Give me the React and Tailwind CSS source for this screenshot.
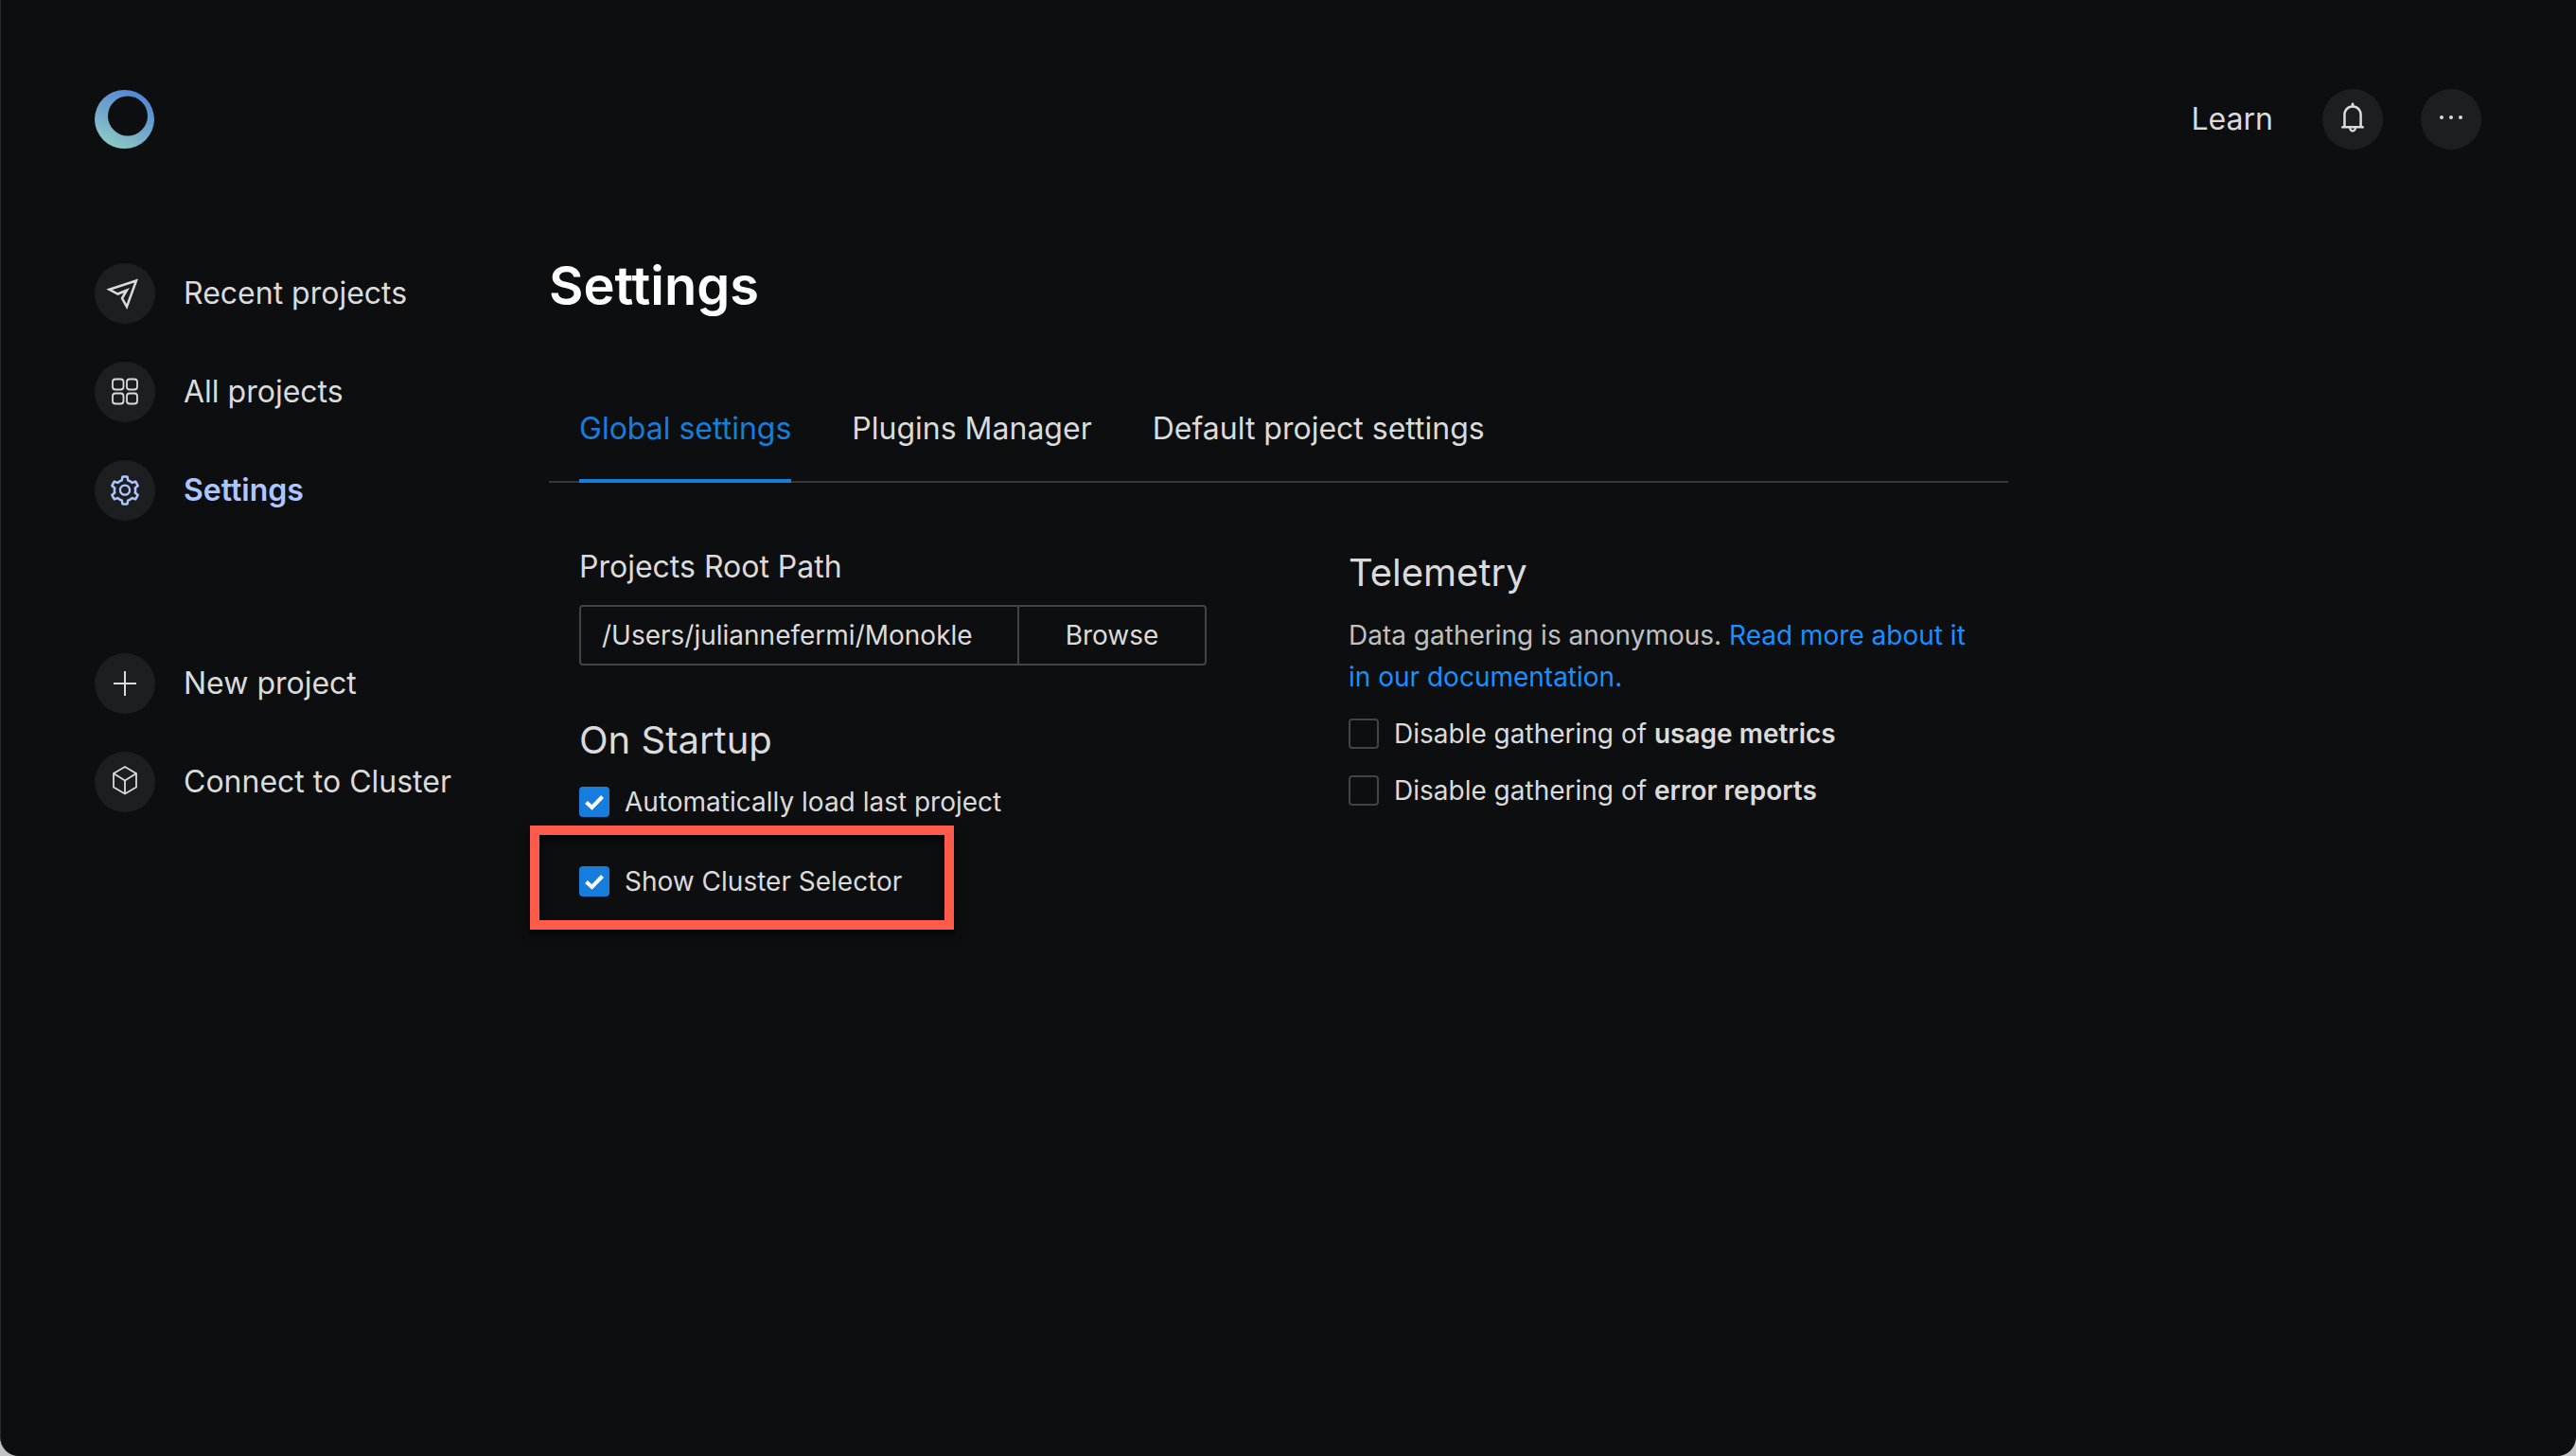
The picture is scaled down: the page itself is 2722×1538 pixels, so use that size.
import { AiOutlineBell, AiOutlineSetting } from "react-icons/ai";

function Logo() {
  return (
    <svg viewBox="0 0 63 62" className="h-[62px] w-[63px]" role="img" aria-label="Monokle">
      <defs>
        <linearGradient id="ring" x1="0.3" y1="0.95" x2="0.75" y2="0.1">
          <stop offset="0" stopColor="#8bc7c3" />
          <stop offset="0.5" stopColor="#6fa6cc" />
          <stop offset="1" stopColor="#5588d6" />
        </linearGradient>
      </defs>
      <path
        fill="url(#ring)"
        fillRule="evenodd"
        d="M31.500 0a31.500 31 0 1 0 0 62a31.500 31 0 1 0 0-62zM35 6.500a21 21 0 1 1 0 42a21 21 0 1 1 0-42z"
      />
    </svg>
  );
}

function SendIcon() {
  return (
    <svg viewBox="0 0 64 64" className="size-16" fill="none" stroke="currentColor" strokeWidth="2.500" strokeLinejoin="miter">
      <path d="M44 18.500L15.500 27.800L24.500 32.500L34 28.500L29 37L34 46Z" />
    </svg>
  );
}

function GridIcon() {
  return (
    <svg viewBox="0 0 64 64" className="size-16" fill="none" stroke="currentColor" strokeWidth="1.800">
      <rect x="19" y="18.500" width="11.500" height="11" rx="3" />
      <rect x="34" y="18.500" width="11" height="11" rx="3" />
      <rect x="19" y="33.500" width="11.500" height="11" rx="3" />
      <rect x="34" y="33.500" width="11" height="11" rx="3" />
    </svg>
  );
}

function PlusIcon() {
  return (
    <svg viewBox="0 0 64 64" className="size-16" stroke="currentColor" strokeWidth="2">
      <path d="M20 32H44M32 19V45" />
    </svg>
  );
}

function CubeIcon() {
  return (
    <svg viewBox="0 0 64 64" className="size-16" fill="none" stroke="currentColor" strokeWidth="1.800" strokeLinejoin="round">
      <path d="M32 16L44 23V37.500L32 44.500L20 37.500V23ZM20 23L32 30.500L44 23M32 30.500V44.500" />
    </svg>
  );
}

function DotsIcon() {
  return (
    <svg viewBox="0 0 64 64" className="size-16" fill="currentColor">
      <circle cx="22" cy="30" r="2" />
      <circle cx="32" cy="30" r="2" />
      <circle cx="42" cy="30" r="2" />
    </svg>
  );
}

function Disc({ children }) {
  return (
    <span className="flex size-16 shrink-0 items-center justify-center rounded-full bg-[#1d1e20]">{children}</span>
  );
}

function NavItem({ icon, label, active }) {
  return (
    <button
      type="button"
      aria-current={active ? "page" : undefined}
      className={
        active
          ? "flex items-center gap-[30px] text-left text-[32px] leading-10 font-semibold text-[#adc6ff]"
          : "flex items-center gap-[30px] text-left text-[32px] leading-10 text-[#dbdbdb]"
      }
    >
      <Disc>{icon}</Disc>
      {label}
    </button>
  );
}

function Tab({ label, active }) {
  return (
    <button
      type="button"
      role="tab"
      aria-selected={Boolean(active)}
      className={
        active
          ? "-mb-0.5 border-b-4 border-[#177ddc] pb-[33px] text-[32px] leading-10 text-[#177ddc]"
          : "-mb-0.5 border-b-4 border-transparent pb-[33px] text-[32px] leading-10 text-[#dbdbdb]"
      }
    >
      {label}
    </button>
  );
}

function Check({ id, checked, children }) {
  return (
    <div className="flex items-center gap-4">
      <span className="relative flex size-8 shrink-0">
        <input
          id={id}
          type="checkbox"
          defaultChecked={checked}
          className="peer size-8 appearance-none rounded-[4px] border-2 border-[#434343] checked:border-[#177ddc] checked:bg-[#177ddc]"
        />
        <svg
          viewBox="0 0 32 32"
          className="pointer-events-none absolute inset-0 hidden size-8 peer-checked:block"
          fill="none"
          stroke="#fff"
          strokeWidth="4"
        >
          <path d="M7.500 16.500L13.500 22L24.500 10.500" />
        </svg>
      </span>
      <label htmlFor={id} className="text-[28px] leading-8 text-[#dbdbdb]">
        {children}
      </label>
    </div>
  );
}

export default function App() {
  return (
    <div className="bg-[#c4c4c6] font-[Inter,sans-serif]">
      <div className="flex min-h-screen flex-col rounded-b-[20px] border-l border-[#27292a] bg-[#0c0e0f] pt-[94px] pr-[100px] pb-24 pl-[99px] text-[#dbdbdb]">
        <header className="flex h-16 items-center justify-between">
          <Logo />
          <div className="flex items-center gap-10">
            <a href="#learn" className="mr-3 text-[32px] leading-10">
              Learn
            </a>
            <button type="button" aria-label="Notifications">
              <Disc>
                <AiOutlineBell className="mb-1 size-9" />
              </Disc>
            </button>
            <button type="button" aria-label="More">
              <Disc>
                <DotsIcon />
              </Disc>
            </button>
          </div>
        </header>

        <div className="mt-[108px] flex">
          <nav className="flex w-[480px] shrink-0 flex-col gap-10 pt-3">
            <NavItem icon={<SendIcon />} label="Recent projects" />
            <NavItem icon={<GridIcon />} label="All projects" />
            <NavItem icon={<AiOutlineSetting className="size-9" />} label="Settings" active />
            <div className="mt-[100px] flex flex-col gap-10">
              <NavItem icon={<PlusIcon />} label="New project" />
              <NavItem icon={<CubeIcon />} label="Connect to Cluster" />
            </div>
          </nav>

          <main className="max-w-[1542px] flex-1">
            <h1 className="text-[56px] leading-[72px] font-semibold text-white">Settings</h1>
            <div role="tablist" className="mt-[95px] flex gap-16 border-b-2 border-[#363638] px-8">
              <Tab label="Global settings" active />
              <Tab label="Plugins Manager" />
              <Tab label="Default project settings" />
            </div>

            <div className="grid grid-cols-2 gap-[150px] pr-[34px] pl-8">
              <section className="pt-[69px]">
                <label htmlFor="root-path" className="block text-[32px] leading-10">
                  Projects Root Path
                </label>
                <div className="mt-5 flex h-16 rounded-[4px] border-2 border-[#434343] text-[28px] leading-8">
                  <input
                    id="root-path"
                    type="text"
                    defaultValue="/Users/juliannefermi/Monokle"
                    className="min-w-0 flex-1 bg-transparent px-[22px] outline-none"
                  />
                  <button type="button" className="w-[198px] border-l-2 border-[#434343]">
                    Browse
                  </button>
                </div>

                <h2 className="mt-[55px] text-[40px] leading-12">On Startup</h2>
                <div className="mt-[25px]">
                  <Check id="auto-load" checked>
                    Automatically load last project
                  </Check>
                </div>
                <div className="mt-[9px] -ml-[52px] w-fit border-[10px] border-[#ff5a4a] pt-[33px] pr-[45px] pb-[25px] pl-[42px] shadow-[0_5px_8px_rgba(0,0,0,0.7),inset_0_5px_8px_rgba(0,0,0,0.7)]">
                  <Check id="cluster-selector" checked>
                    Show Cluster Selector
                  </Check>
                </div>
              </section>

              <section className="pt-[71px]">
                <h2 className="text-[40px] leading-12">Telemetry</h2>
                <p className="mt-5 text-[28px] leading-[44px] text-[#c0c0c0]">
                  Data gathering is anonymous.{" "}
                  <a href="#documentation" className="text-[#1890ff]">
                    Read more about it in our documentation.
                  </a>
                </p>
                <div className="mt-[22px] flex flex-col gap-7">
                  <Check id="usage-metrics">
                    Disable gathering of <strong className="font-semibold">usage metrics</strong>
                  </Check>
                  <Check id="error-reports">
                    Disable gathering of <strong className="font-semibold">error reports</strong>
                  </Check>
                </div>
              </section>
            </div>
          </main>
        </div>
      </div>
    </div>
  );
}
